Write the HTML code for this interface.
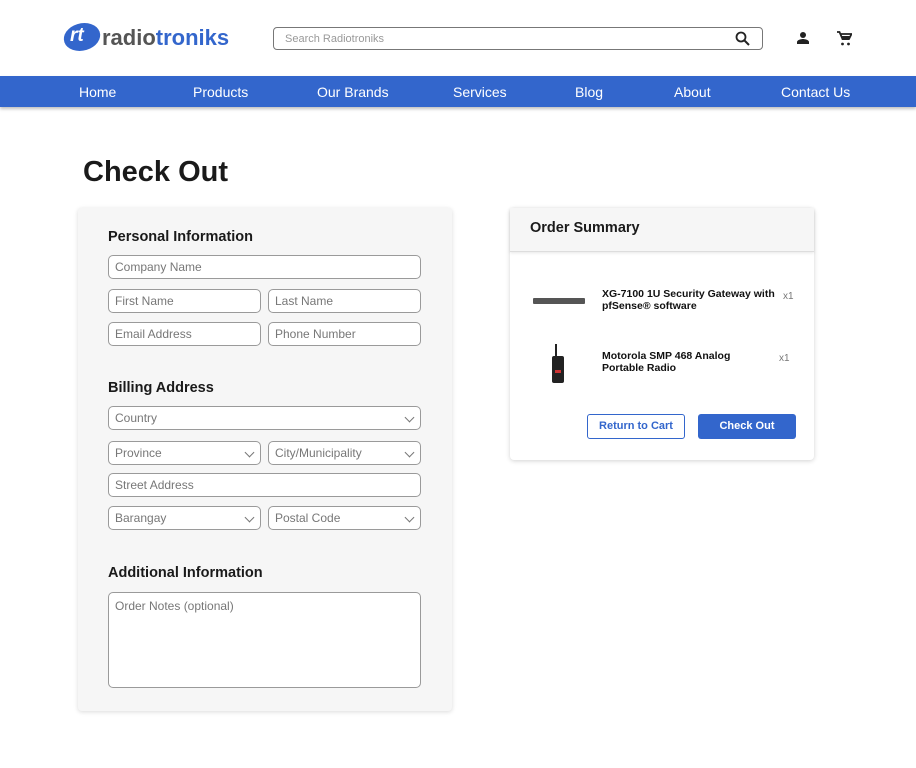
<!DOCTYPE html>
<html><head><style>
*{box-sizing:border-box;margin:0;padding:0}
body{width:916px;height:768px;background:#fff;font-family:"Liberation Sans",Arial,sans-serif;position:relative;overflow:hidden}
.a{position:absolute}
.in{position:absolute;border:1px solid #9a9a9a;border-radius:5px;background:#fff;font-size:12px;color:#777;padding-left:6px;display:flex;align-items:center;height:24px}
.chev{position:absolute;right:7px;top:7px;width:7px;height:7px;border-right:1.5px solid #777;border-bottom:1.5px solid #777;transform:rotate(45deg)}
.nav span{position:absolute;top:84px;color:#fff;font-size:14px}
h2{position:absolute;font-size:14.5px;font-weight:bold;color:#1a1a1a}
</style></head><body>
<div class="a" style="left:64px;top:23px;width:36px;height:28px;background:#3366cc;border-radius:50%;transform:skewX(-10deg)"></div>
<div class="a" style="left:70px;top:25px;color:#fff;font-style:italic;font-weight:bold;font-size:19px">rt</div>
<div class="a" style="left:102px;top:25px;font-size:22px;font-weight:bold;color:#555">radio<span style="color:#3366cc">troniks</span></div>
<div class="a" style="left:273px;top:27px;width:490px;height:23px;border:1px solid #777;border-radius:4px;font-size:11px;color:#999;padding:5px 11px">Search Radiotroniks</div>
<svg class="a" style="left:735px;top:31px" width="15" height="15" viewBox="0 0 15 15"><circle cx="6" cy="6" r="4.5" fill="none" stroke="#222" stroke-width="1.8"/><path d="M9.5 9.5L14 14" stroke="#222" stroke-width="2"/></svg>
<svg class="a" style="left:797px;top:32px" width="12" height="12" viewBox="0 0 12 12"><circle cx="6" cy="3" r="3" fill="#222"/><path d="M0 12v-2c0-2 4-3 6-3s6 1 6 3v2z" fill="#222"/></svg>
<svg class="a" style="left:837px;top:31px" width="15" height="15" viewBox="0 0 15 15"><path d="M0 1h2.5l3 7h6.5l2.5-5H4" fill="none" stroke="#222" stroke-width="1.8"/><path d="M4 5h10l-2 4H5z" fill="#222"/><circle cx="5.5" cy="13" r="1.4" fill="#222"/><circle cx="11.5" cy="13" r="1.4" fill="#222"/></svg>
<div class="a nav" style="left:0;top:76px;width:916px;height:31px;background:#3366cc;box-shadow:0 2px 3px rgba(0,0,0,.25)"></div>
<div class="nav"><span style="left:79px">Home</span><span style="left:193px">Products</span><span style="left:317px">Our Brands</span><span style="left:453px">Services</span><span style="left:575px">Blog</span><span style="left:674px">About</span><span style="left:781px">Contact Us</span></div>
<div class="a" style="left:83px;top:156px;font-size:29px;font-weight:bold;color:#1a1a1a">Check Out</div>
<div class="a" style="left:78px;top:208px;width:374px;height:503px;background:#f6f6f6;border-radius:4px;box-shadow:0 1px 5px rgba(0,0,0,.15)"></div>
<h2 style="left:108px;top:229px">Personal Information</h2>
<div class="in" style="left:108px;top:255px;width:313px">Company Name</div>
<div class="in" style="left:108px;top:289px;width:153px">First Name</div>
<div class="in" style="left:268px;top:289px;width:153px">Last Name</div>
<div class="in" style="left:108px;top:322px;width:153px">Email Address</div>
<div class="in" style="left:268px;top:322px;width:153px">Phone Number</div>
<h2 style="left:108px;top:380px">Billing Address</h2>
<div class="in" style="left:108px;top:406px;width:313px">Country<i class="chev"></i></div>
<div class="in" style="left:108px;top:441px;width:153px">Province<i class="chev"></i></div>
<div class="in" style="left:268px;top:441px;width:153px">City/Municipality<i class="chev"></i></div>
<div class="in" style="left:108px;top:473px;width:313px">Street Address</div>
<div class="in" style="left:108px;top:506px;width:153px">Barangay<i class="chev"></i></div>
<div class="in" style="left:268px;top:506px;width:153px">Postal Code<i class="chev"></i></div>
<h2 style="left:108px;top:565px">Additional Information</h2>
<div class="in" style="left:108px;top:592px;width:313px;height:96px;align-items:flex-start;padding-top:6px">Order Notes (optional)</div>
<div class="a" style="left:510px;top:208px;width:304px;height:252px;background:#fff;border-radius:4px;box-shadow:0 1px 5px rgba(0,0,0,.18)"></div>
<div class="a" style="left:510px;top:208px;width:304px;height:44px;background:#f6f6f6;border-bottom:1px solid #ddd;box-shadow:0 1px 3px rgba(0,0,0,.1)"></div>
<h2 style="left:530px;top:220px">Order Summary</h2>
<div class="a" style="left:533px;top:298px;width:52px;height:6px;background:#555;border-radius:1px"></div>
<div class="a" style="left:602px;top:288px;font-size:10.5px;font-weight:bold;line-height:12px;color:#111;width:178px">XG-7100 1U Security Gateway with pfSense® software</div>
<div class="a" style="left:783px;top:291px;font-size:10px;color:#777">x1</div>
<div class="a" style="left:555px;top:344px;width:2px;height:14px;background:#222"></div>
<div class="a" style="left:552px;top:356px;width:12px;height:27px;background:#222;border-radius:2px"></div>
<div class="a" style="left:555px;top:370px;width:6px;height:3px;background:#c33"></div>
<div class="a" style="left:602px;top:350px;font-size:10.5px;font-weight:bold;line-height:12px;color:#111;width:172px">Motorola SMP 468 Analog Portable Radio</div>
<div class="a" style="left:779px;top:353px;font-size:10px;color:#777">x1</div>
<div class="a" style="left:587px;top:414px;width:98px;height:25px;border:1.5px solid #3366cc;border-radius:3px;color:#3366cc;font-size:11px;font-weight:bold;text-align:center;line-height:22px">Return to Cart</div>
<div class="a" style="left:698px;top:414px;width:98px;height:25px;background:#3366cc;border-radius:3px;color:#fff;font-size:11px;font-weight:bold;text-align:center;line-height:25px">Check Out</div>
</body></html>
